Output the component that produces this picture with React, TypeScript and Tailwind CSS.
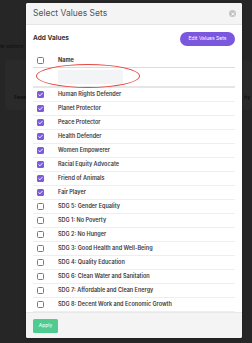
import React from "react";

const checked = [
  "Human Rights Defender",
  "Planet Protector",
  "Peace Protector",
  "Health Defender",
  "Women Empowerer",
  "Racial Equity Advocate",
  "Friend of Animals",
  "Fair Player",
];
const unchecked = [
  "SDG 5: Gender Equality",
  "SDG 1: No Poverty",
  "SDG 2: No Hunger",
  "SDG 3: Good Health and Well-Being",
  "SDG 4: Quality Education",
  "SDG 6: Clean Water and Sanitation",
  "SDG 7: Affordable and Clean Energy",
  "SDG 8: Decent Work and Economic Growth",
];

function Box({ on }: { on: boolean }) {
  if (on)
    return (
      <div className="w-[7px] h-[7px] rounded-[1.5px] bg-[#7c5ad9] flex items-center justify-center">
        <svg width="5" height="5" viewBox="0 0 10 10">
          <path d="M1.5 5.3 L4 7.6 L8.6 2.4" fill="none" stroke="white" strokeWidth="1.8" strokeLinecap="round" strokeLinejoin="round" />
        </svg>
      </div>
    );
  return <div className="w-[7px] h-[7px] rounded-[1.5px] border border-[#7a7a7a] bg-white" />;
}

export default function App() {
  const font = { fontFamily: "Inter, 'Noto Sans', sans-serif" };
  return (
    <div className="relative w-[252px] h-[343px] bg-[#262626] overflow-hidden" style={font}>
      {/* dimmed background page */}
      <div className="absolute left-0 top-[43px] text-[5px] text-[#0e0e0e]">te options</div>
      <div className="absolute left-[5px] top-[60px] w-[247px] h-[50px] bg-[#2a2a2a] rounded-sm">
        <div className="absolute left-[9px] top-[34px] text-[5px] font-semibold text-[#0e0e0e]">Fewe</div>
        <div className="absolute left-[239px] top-[34px] text-[5px] font-semibold text-[#0e0e0e]">ity</div>
      </div>

      {/* modal */}
      <div className="absolute left-[26px] top-[3px] w-[216px] h-[335px] bg-white rounded-[2px] flex flex-col overflow-hidden shadow">
        <div className="h-[22px] bg-[#f4f4f4] border-b border-[#e6e6e6] flex items-center justify-between px-[7px]">
          <span className="text-[8.5px] text-[#555]">Select Values Sets</span>
          <div className="w-[7px] h-[7px] rounded-full bg-[#c4c4c4] flex items-center justify-center mr-[-1px]">
            <svg width="4" height="4" viewBox="0 0 10 10">
              <path d="M2 2 L8 8 M8 2 L2 8" stroke="white" strokeWidth="2" strokeLinecap="round" />
            </svg>
          </div>
        </div>
        <div className="flex-1 px-[7px] pt-[7px] relative">
          <div className="flex items-center justify-between h-[14px]">
            <span className="text-[6.5px] font-bold text-[#333]">Add Values</span>
            <div className="h-[14px] w-[55px] rounded-full bg-[#7b57df] text-white text-[5px] flex items-center justify-center">
              Edit Values Sets
            </div>
          </div>
          <div className="mt-[8px] h-[14px] flex items-center border-b border-[#dcdcdc]">
            <div className="w-[25px] pl-[4px]">
              <Box on={false} />
            </div>
            <span className="text-[5.5px] font-bold text-[#333]">Name</span>
          </div>
          <div className="h-[20px] flex items-center border-b-2 border-[#e6e6e6] pl-[25px]">
            <div className="w-[65px] h-[14px] bg-[#f3f4f6] rounded-[1px]" />
          </div>
          {[...checked.map((n) => [n, true] as const), ...unchecked.map((n) => [n, false] as const)].map(([n, on]) => (
            <div key={n} className="h-[14px] flex items-center border-b border-[#eeeeee]">
              <div className="w-[25px] pl-[4px]">
                <Box on={on} />
              </div>
              <span className="text-[5.5px] font-semibold text-[#3a3a3a]">{n}</span>
            </div>
          ))}
          {/* red annotation ellipse */}
          <div className="absolute left-[10px] top-[39px] w-[104px] h-[24px] rounded-[50%] border border-[#e4473d]" />
        </div>
        <div className="h-[26px] bg-[#f4f4f4] border-t border-[#e8e8e8] flex items-center px-[7px]">
          <div className="w-[25px] h-[14px] rounded-[1.5px] bg-[#4fcb8f] text-white text-[5px] flex items-center justify-center">
            Apply
          </div>
        </div>
      </div>
    </div>
  );
}
